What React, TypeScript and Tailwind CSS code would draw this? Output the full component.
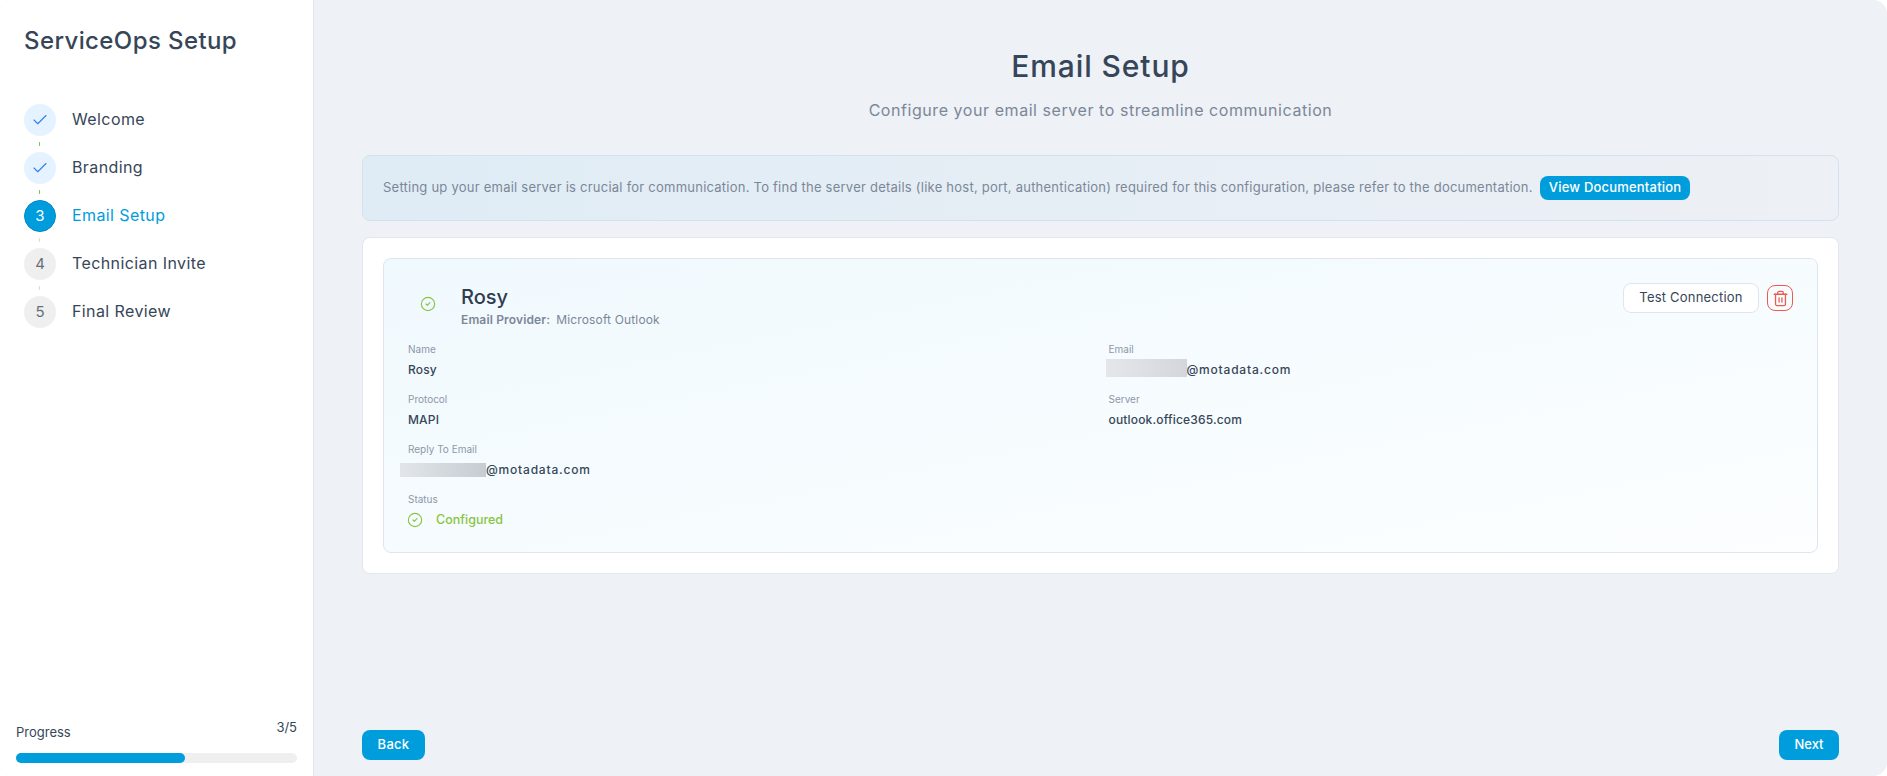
import { Check, CircleCheck, Trash2 } from 'lucide-react';

const font = { fontFamily: 'Inter, "Noto Sans", sans-serif' };

const steps = [
  { label: 'Welcome', state: 'done' },
  { label: 'Branding', state: 'done' },
  { label: 'Email Setup', state: 'active' },
  { label: 'Technician Invite', state: 'todo' },
  { label: 'Final Review', state: 'todo' },
];

function Field({ label, value, redact }: { label: string; value: React.ReactNode; redact?: string }) {
  return (
    <div className="h-[50px]">
      <div className="text-[10px] leading-[15px] text-[#8d97a8]">{label}</div>
      <div className="relative mt-[3px] text-[12px] leading-[20px] font-medium tracking-[0.17px] text-[#364658]">
        {value}
        {redact && <div className={redact} />}
      </div>
    </div>
  );
}

function MaskedEmail() {
  return (
    <span className="tracking-[0.8px]">
      <span className="inline-block w-[78px]" />@motadata.com
    </span>
  );
}

export default function App() {
  return (
    <div style={font} className="flex h-[776px] w-[1887px] overflow-hidden rounded-[14px] bg-[#eef1f6]">
      {/* sidebar */}
      <aside className="flex w-[314px] shrink-0 flex-col border-r border-[#dfe4ec] bg-white">
        <h1 className="pl-[24px] pt-[25px] text-[24px] leading-[32px] font-medium tracking-[0.4px] text-[#364658]">ServiceOps Setup</h1>
        <div className="mt-[47px] flex flex-col pl-[24px]">
          {steps.map((s, i) => (
            <div key={s.label} className="relative flex h-[48px] items-start">
              <div
                className={`flex h-[32px] w-[32px] items-center justify-center rounded-full text-[15px] ${
                  s.state === 'done'
                    ? 'bg-[#e5f2ff] text-[#2f80ed]'
                    : s.state === 'active'
                      ? 'border border-[#0b86c4] bg-[#009ddd] text-white'
                      : 'bg-[#efefef] text-[#666f7a]'
                }`}
              >
                {s.state === 'done' ? <Check size={18} strokeWidth={1.5} /> : i + 1}
              </div>
              <span
                className={`-mt-[1px] ml-[16px] text-[16px] leading-[32px] tracking-[0.4px] ${
                  s.state === 'active' ? 'text-[#009ddd]' : 'text-[#364658]'
                }`}
              >
                {s.label}
              </span>
              {i < 4 && (
                <div className={`absolute left-[15px] top-[38px] h-[4px] w-[1px] ${s.state === 'done' ? 'bg-[#89c541]' : 'bg-[#dddddd]'}`} />
              )}
            </div>
          ))}
        </div>
        <div className="mt-auto px-[16px] pb-[13px]">
          <div className="flex items-start justify-between">
            <span className="mt-[5px] text-[13px] leading-[20px] text-[#364658]">Progress</span>
            <span className="text-[13px] leading-[20px] text-[#364658]">3/5</span>
          </div>
          <div className="mt-[11px] h-[10px] w-[281px] rounded-full bg-[#efefef]">
            <div className="h-full w-[169px] rounded-full bg-[#009ddd]" />
          </div>
        </div>
      </aside>

      {/* main */}
      <main className="flex min-w-0 flex-1 flex-col pb-[16px] pl-[48px] pr-[48px]">
        <div className="pt-[46px] text-center">
          <h2 className="text-[30px] leading-[40px] font-medium tracking-[0.9px] text-[#364658]">Email Setup</h2>
          <p className="mt-[12px] text-[16px] leading-[24px] tracking-[0.56px] text-[#7b8798]">
            Configure your email server to streamline communication
          </p>
        </div>

        <div className="mt-[33px] flex h-[66px] items-center rounded-[8px] border border-[#d3e2ef] bg-gradient-to-r from-[#dfecf5] to-[#edf0f5] px-[20px]">
          <span className="text-[13px] tracking-[0.235px] text-[#7b8798]">
            Setting up your email server is crucial for communication. To find the server details (like host, port, authentication) required for this configuration, please refer to the documentation.
          </span>
          <button className="ml-[7px] h-[24px] rounded-[8px] bg-[#009ddd] px-[9px] text-[13px] font-medium tracking-[0.2px] text-white">
            View Documentation
          </button>
        </div>

        <div className="mt-[16px] rounded-[8px] border border-[#e2e7ee] bg-white p-[20px]">
          <div className="h-[295px] rounded-[8px] border border-[#dde5ee] bg-gradient-to-br from-[#f0f9fe] to-[#fcfeff] px-[24px]">
            <div className="flex items-start justify-between pt-[25px]">
              <div className="flex items-center">
                <CircleCheck size={16} strokeWidth={1.7} className="mb-[5px] ml-[12px] text-[#89c541]" />
                <div className="ml-[25px]">
                  <div className="text-[20px] leading-[26px] font-medium text-[#2f3d4f]">Rosy</div>
                  <div className="mt-[1px] text-[12px] leading-[18px] tracking-[0.15px] text-[#7b8798]">
                    <span className="font-semibold">Email Provider:</span>
                    <span className="ml-[6px]">Microsoft Outlook</span>
                  </div>
                </div>
              </div>
              <div className="-mt-[1px] flex items-center gap-[8px]">
                <button className="h-[30px] w-[136px] rounded-[8px] border border-[#e0e5ed] bg-white text-[13px] tracking-[0.2px] text-[#364658]">
                  Test Connection
                </button>
                <button className="flex h-[26px] w-[26px] items-center justify-center rounded-[8px] border border-[#ef5a4c] text-[#ef5a4c]">
                  <Trash2 size={17} strokeWidth={1.8} />
                </button>
              </div>
            </div>

            <div className="mt-[13px] grid grid-cols-2 gap-x-[16px]">
              <Field label="Name" value="Rosy" />
              <Field
                label="Email"
                value={<MaskedEmail />}
                redact="absolute -left-[3px] -top-[1px] h-[18px] w-[81px] bg-gradient-to-r from-[#e4e7ea] to-[#d3d7dc]"
              />
              <Field label="Protocol" value="MAPI" />
              <Field label="Server" value="outlook.office365.com" />
              <Field
                label="Reply To Email"
                value={<MaskedEmail />}
                redact="absolute -left-[8px] top-[3px] h-[14px] w-[86px] bg-gradient-to-r from-[#e2e6ea] to-[#c6ccd2]"
              />
              <div />
              <div>
                <div className="text-[10px] leading-[15px] text-[#8d97a8]">Status</div>
                <div className="mt-[3px] flex items-center">
                  <CircleCheck size={16} strokeWidth={1.7} className="-ml-[1px] text-[#89c541]" />
                  <span className="ml-[13px] text-[12.5px] leading-[20px] font-medium text-[#89c541]">Configured</span>
                </div>
              </div>
            </div>
          </div>
        </div>

        <div className="mt-auto flex items-center justify-between">
          <button className="h-[30px] w-[63px] rounded-[8px] bg-[#009ddd] text-[13px] font-medium tracking-[0.3px] text-white">Back</button>
          <button className="h-[30px] w-[60px] rounded-[8px] bg-[#009ddd] text-[13px] font-medium text-white">Next</button>
        </div>
      </main>
    </div>
  );
}
